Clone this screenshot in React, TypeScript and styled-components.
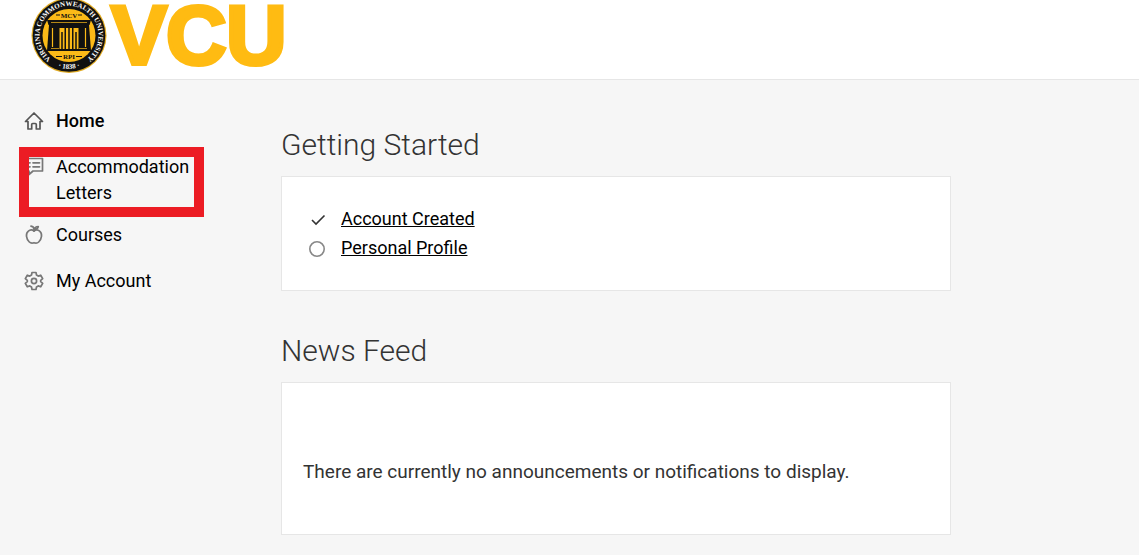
import React from "react";
import styled, { createGlobalStyle } from "styled-components";

const GlobalStyle = createGlobalStyle`
  *, *::before, *::after { box-sizing: border-box; }
  body {
    margin: 0;
    background: #f6f6f6;
    color: #333;
    font-family: Roboto, "Liberation Sans", sans-serif;
    font-size: 18px;
    line-height: 26px;
  }
`;

const Header = styled.header`
  display: flex;
  align-items: flex-start;
  height: 80px;
  padding-left: 31px;
  background: #fff;
  border-bottom: 1px solid #e6e6e6;
`;

const Brand = styled.a`
  display: block;
  line-height: 0;
`;

const Logo = styled.svg`
  display: block;
  width: 260px;
  height: 76px;
  overflow: visible;
`;

const Layout = styled.div`
  display: grid;
  grid-template-columns: 281px minmax(0, 670px);
`;

const Nav = styled.nav`
  padding: 18px 80px 0 24px;
`;

const NavList = styled.ul`
  list-style: none;
  margin: 0;
  padding: 0;
`;

const NavItem = styled.li<{ $wrapped?: boolean }>`
  position: relative;
  padding: ${(p) => (p.$wrapped ? "10px 0 6px" : "10px 0")};
`;

const NavLink = styled.a<{ $active?: boolean }>`
  display: flex;
  gap: 12px;
  color: #000;
  font-weight: ${(p) => (p.$active ? 500 : 400)};
  text-decoration: none;
`;

const NavIcon = styled.svg<{ $dark?: boolean }>`
  flex: none;
  width: 20px;
  height: 20px;
  margin-top: 3px;
  fill: none;
  stroke: ${(p) => (p.$dark ? "#555" : "#777")};
  stroke-width: 1.7;
  stroke-linejoin: round;
  stroke-linecap: round;
`;

const Highlight = styled.span`
  position: absolute;
  inset: 3px -3px -5px -5px;
  border: 10px solid #ec1c24;
  pointer-events: none;
`;

const Main = styled.main`
  padding-top: 45px;
`;

const Section = styled.section`
  margin-bottom: 40px;
`;

const Title = styled.h2`
  margin: 0 0 11px;
  font-size: 30px;
  font-weight: 300;
  line-height: 40px;
`;

const Card = styled.div<{ $message?: boolean }>`
  padding: ${(p) => (p.$message ? "76px 21px 49px" : "27px 26px 28px")};
  background: #fff;
  border: 1px solid #e6e6e6;
`;

const Steps = styled.ul`
  list-style: none;
  margin: 0;
  padding: 0;
`;

const Step = styled.li`
  display: flex;
  gap: 13px;
  align-items: center;
  line-height: 29px;
`;

const StepIcon = styled.svg`
  flex: none;
  width: 20px;
  height: 20px;
  margin-top: 2px;
  fill: none;
`;

const StepLink = styled.a`
  color: #000;
  text-decoration: underline;
`;

const Message = styled.p`
  margin: 0;
  font-size: 19px;
`;

function VcuLogo() {
  return (
    <Logo viewBox="0 0 260 76" role="img" aria-label="VCU">
      <defs>
        <path id="seal-top" d="M20.200 59 A29.500 29.500 0 1 1 55.800 59" />
        <path id="seal-bottom" d="M20.500 64 A33.500 33.500 0 0 0 55.500 64" />
      </defs>
      <circle cx="38" cy="35.500" r="37.500" fill="#e0aa22" />
      <circle cx="38" cy="35.500" r="36.300" fill="#111" />
      <circle cx="38" cy="35.500" r="26.500" fill="#fbba18" />
      <g fill="#fff" fontFamily="Liberation Serif, serif" fontWeight="700" textAnchor="middle">
        <text fontSize="7">
          <textPath href="#seal-top" startOffset="50%">
            VIRGINIA COMMONWEALTH UNIVERSITY
          </textPath>
        </text>
        <text fontSize="7">
          <textPath href="#seal-bottom" startOffset="50%">
            · 1838 ·
          </textPath>
        </text>
      </g>
      <g fill="#111" fontFamily="Liberation Serif, serif" fontWeight="700" fontSize="7" textAnchor="middle">
        <text x="38" y="17.500">MCV</text>
        <text x="38" y="59">RPI</text>
      </g>
      <path d="M25 15h4M47 15h4M25 56.500h6M45 56.500h6" stroke="#111" />
      <path d="M16 20h44l-1.500 5H17.500z" fill="#111" />
      <path d="M18 25h40l2 26H16z" fill="#111" />
      <path d="M20 22.500h36M20 48.500h8M48 48.500h8" stroke="#fbba18" strokeWidth=".7" />
      <path d="M21.500 28v19M54.500 28v19" stroke="#fbba18" strokeWidth="1.200" />
      <path d="M28.500 28h5v21h-5zM35 28h6v21h-6zM42.500 28h5v21h-5z" fill="#fbba18" />
      <path d="M38 28v21M31 32v17M45 32v17" stroke="#111" strokeWidth="1.500" />
      <text
        x="80 135 195"
        y="64"
        fill="#ffbb12"
        stroke="#ffbb12"
        strokeWidth="4"
        fontFamily="Liberation Sans, sans-serif"
        fontWeight="700"
        fontSize="84"
      >
        VCU
      </text>
    </Logo>
  );
}

const HomeIcon = () => (
  <NavIcon $dark viewBox="0 0 20 20" aria-hidden="true">
    <path d="M1.500 10.500 10 2l8.500 8.500H16V18h-3.700v-4.500a1 1 0 0 0-1-1H8.700a1 1 0 0 0-1 1V18H4v-7.500z" />
  </NavIcon>
);

const LetterIcon = () => (
  <NavIcon viewBox="0 0 20 20" aria-hidden="true">
    <path d="M2 1.500h16.500V14H9l-4 3.500V14H2z" />
    <path d="M9 5.800h6.500M9 9.800h6.500M5.500 5.800h.5M5.500 9.800h.5" />
  </NavIcon>
);

const AppleIcon = () => (
  <NavIcon viewBox="0 0 20 20" aria-hidden="true">
    <path d="M10 6C8.500 4.700 6 4.600 4.300 6.100 1.300 8.600 2.200 14 5.300 17c1.400 1.300 2.700 1.400 4.700.7 2 .7 3.300.6 4.700-.7 3.100-3 4-8.400 1-10.900C14 4.600 11.500 4.700 10 6z" />
    <path d="M10 6V4.500C10 3 9 1.500 7 1.200M10.500 4.300c.2-1.800 1.500-2.800 3.800-2.800-.2 1.800-1.600 2.800-3.800 2.800z" />
  </NavIcon>
);

const GearIcon = () => (
  <NavIcon viewBox="0 0 20 20" aria-hidden="true">
    <path d="M8 1.500h4l.5 2.600 1.700 1 2.500-.9 2 3.400-2 1.700v1.400l2 1.700-2 3.400-2.500-.9-1.700 1-.5 2.600H8l-.5-2.600-1.700-1-2.500.9-2-3.400 2-1.700V9.300l-2-1.700 2-3.400 2.500.9 1.700-1z" />
    <circle cx="10" cy="10" r="2.600" />
  </NavIcon>
);

export default function App() {
  return (
    <>
      <GlobalStyle />
      <Header>
        <Brand href="#">
          <VcuLogo />
        </Brand>
      </Header>
      <Layout>
        <Nav aria-label="Main">
          <NavList>
            <NavItem>
              <NavLink href="#" $active aria-current="page">
                <HomeIcon />
                Home
              </NavLink>
            </NavItem>
            <NavItem $wrapped>
              <NavLink href="#">
                <LetterIcon />
                Accommodation Letters
              </NavLink>
              <Highlight />
            </NavItem>
            <NavItem>
              <NavLink href="#">
                <AppleIcon />
                Courses
              </NavLink>
            </NavItem>
            <NavItem>
              <NavLink href="#">
                <GearIcon />
                My Account
              </NavLink>
            </NavItem>
          </NavList>
        </Nav>
        <Main>
          <Section>
            <Title>Getting Started</Title>
            <Card>
              <Steps>
                <Step>
                  <StepIcon viewBox="0 0 20 20" role="img" aria-label="Done">
                    <path d="m4 10 4 4 8.500-8.500" stroke="#333" strokeWidth="1.600" />
                  </StepIcon>
                  <StepLink href="#">Account Created</StepLink>
                </Step>
                <Step>
                  <StepIcon viewBox="0 0 20 20" role="img" aria-label="Not done">
                    <circle cx="9" cy="10" r="7.200" stroke="#888" strokeWidth="1.600" />
                  </StepIcon>
                  <StepLink href="#">Personal Profile</StepLink>
                </Step>
              </Steps>
            </Card>
          </Section>
          <Section>
            <Title>News Feed</Title>
            <Card $message>
              <Message>There are currently no announcements or notifications to display.</Message>
            </Card>
          </Section>
        </Main>
      </Layout>
    </>
  );
}
